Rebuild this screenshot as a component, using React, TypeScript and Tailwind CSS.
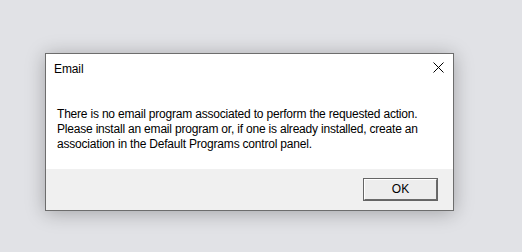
export default function App() {
  return (
    <div
      className="h-[252px] w-[522px] overflow-hidden bg-[#e1e2e6] pl-[45px] pt-[53px] text-black"
      style={{ fontFamily: '"Liberation Sans", Arial, sans-serif' }}
    >
      {/* dialog window */}
      <div className="w-[409px] border border-[#6d6d6d] bg-white shadow-[0_2px_18px_rgba(0,0,0,0.28)]">
        <div className="h-[115px]">
          <div className="flex items-start justify-between pl-[8px] pr-[9px] pt-[8px]">
            <span className="text-[12px] leading-[15px] tracking-[-0.1px]">Email</span>
            <svg width="11" height="11" viewBox="0 0 11 11">
              <path d="M0.5 0.5L10.5 10.5M10.5 0.5L0.5 10.5" stroke="#000" strokeWidth="1" fill="none" />
            </svg>
          </div>
          <p className="mt-[30px] whitespace-nowrap pl-[11px] text-[12px] leading-[15px] tracking-[-0.2px]">
            There is no email program associated to perform the requested action.
            <br />
            Please install an email program or, if one is already installed, create an
            <br />
            association in the Default Programs control panel.
          </p>
        </div>

        {/* button bar */}
        <div className="flex h-[41px] items-start justify-end bg-[#f0f0f0] pr-[15px] pt-[9px]">
          <button className="h-[23px] w-[75px] border border-[#656565] bg-[#ededed] p-0">
            <div className="flex h-full w-full items-center justify-center border border-b-[#6a6a6a] border-l-white border-r-[#6a6a6a] border-t-white text-[12px] leading-[15px]">
              OK
            </div>
          </button>
        </div>
      </div>
    </div>
  );
}
